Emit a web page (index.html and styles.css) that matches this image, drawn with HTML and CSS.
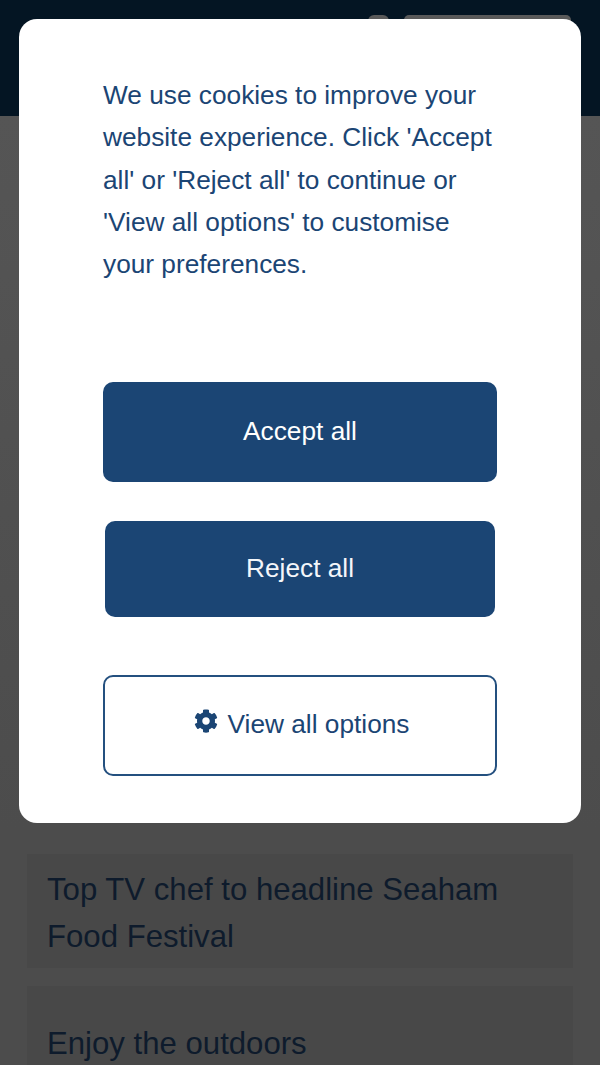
FILE: index.html
```html
<!DOCTYPE html>
<html lang="en">
<head>
<meta charset="utf-8">
<title>Cookie preferences</title>
<link rel="stylesheet" href="styles.css">
</head>
<body>
<div class="page">
  <header class="site-header">
    <span class="header-icon"></span>
    <span class="header-search"></span>
  </header>
  <main class="content">
    <div class="card card-story">Top TV chef to headline Seaham Food Festival</div>
    <div class="card card-cta">Enjoy the outdoors</div>
  </main>
</div>
<div class="overlay">
  <div class="modal" role="dialog">
    <p class="message">We use cookies to improve your website experience. Click 'Accept all' or 'Reject all' to continue or 'View all options' to customise your preferences.</p>
    <div class="actions">
      <button class="btn btn-accept">Accept all</button>
      <button class="btn btn-reject">Reject all</button>
      <button class="btn btn-options">
        <svg class="cog" viewBox="0 0 512 512" aria-hidden="true"><path d="M487.4 315.7l-42.6-24.6c4.3-23.2 4.3-47 0-70.2l42.6-24.6c4.9-2.8 7.1-8.6 5.5-14-11.1-35.6-30-67.8-54.7-94.6-3.8-4.1-10-5.1-14.8-2.3L380.8 110c-17.9-15.4-38.5-27.3-60.8-35.1V25.8c0-5.6-3.9-10.5-9.4-11.7-36.7-8.2-74.3-7.8-109.2 0-5.5 1.2-9.4 6.1-9.4 11.7V75c-22.2 7.9-42.8 19.8-60.8 35.1L88.7 85.5c-4.9-2.8-11-1.9-14.8 2.3-24.7 26.7-43.6 58.9-54.7 94.6-1.7 5.4.6 11.2 5.5 14L67.3 221c-4.3 23.2-4.3 47 0 70.2l-42.6 24.6c-4.9 2.8-7.1 8.6-5.5 14 11.1 35.6 30 67.8 54.7 94.6 3.8 4.1 10 5.1 14.8 2.3l42.6-24.6c17.9 15.4 38.5 27.3 60.8 35.1v49.2c0 5.6 3.9 10.5 9.4 11.7 36.7 8.2 74.3 7.8 109.2 0 5.5-1.2 9.4-6.1 9.4-11.7v-49.2c22.2-7.9 42.8-19.8 60.8-35.1l42.6 24.6c4.9 2.8 11 1.9 14.8-2.3 24.7-26.7 43.6-58.9 54.7-94.6 1.5-5.5-.7-11.3-5.6-14.1zM256 336c-44.1 0-80-35.9-80-80s35.9-80 80-80 80 35.9 80 80-35.9 80-80 80z"/></svg>
        <span>View all options</span>
      </button>
    </div>
  </div>
</div>
</body>
</html>
```
FILE: styles.css
```css
* { box-sizing: border-box; }
html, body { margin: 0; padding: 0; height: 100%; overflow: hidden; }
body {
  background: #4c4c4c;
  font-family: "Liberation Sans", Arial, sans-serif;
}
.page {
  height: 1065px;
  overflow: hidden;
  background: linear-gradient(#555555 116px, #4c4c4c 830px);
}
.site-header {
  height: 116px;
  background: #041523;
  display: flex;
  justify-content: flex-end;
  align-items: flex-start;
  gap: 15px;
  padding: 15px 29px 0 0;
}
.header-icon { width: 21px; height: 30px; border-radius: 6px; background: #5a5a5a; }
.header-search { width: 167px; height: 30px; border-radius: 5px; background: #5a5a5a; }
.content {
  padding: 738px 27px 0;
  display: flex;
  flex-direction: column;
  gap: 18px;
}
.card {
  background: #484848;
  color: #0e1b2c;
  font-size: 31.15px;
  line-height: 47px;
  padding: 12px 20px 0;
}
.card-story { height: 114px; }
.card-cta { height: 140px; padding-top: 34px; }
.overlay {
  position: fixed;
  inset: 0;
  padding: 19px;
}
.modal {
  background: #fff;
  border-radius: 18px;
  height: 804px;
  padding: 55px 84px 0;
  display: flex;
  flex-direction: column;
}
.message {
  margin: 0;
  color: #1b4574;
  font-size: 26.25px;
  line-height: 42.3px;
}
.actions {
  margin-top: 97px;
  display: flex;
  flex-direction: column;
  align-items: center;
}
.btn {
  font-family: inherit;
  font-size: 26.25px;
  border-radius: 10px;
  border: 0;
  display: flex;
  align-items: center;
  justify-content: center;
  padding: 0 0 2px;
}
.btn-accept { width: 394px; height: 100px; background: #1b4574; color: #fff; }
.btn-reject { width: 390px; height: 96px; margin-top: 39px; background: #1b4574; color: #f4f6fa; }
.btn-options {
  width: 394px;
  height: 101px;
  margin-top: 58px;
  background: #fff;
  color: #1b4574;
  border: 2px solid #24507f;
  gap: 10px;
  padding-left: 3px;
}
.cog { width: 24px; height: 24px; fill: #1b4574; margin-top: -8px; }
```
